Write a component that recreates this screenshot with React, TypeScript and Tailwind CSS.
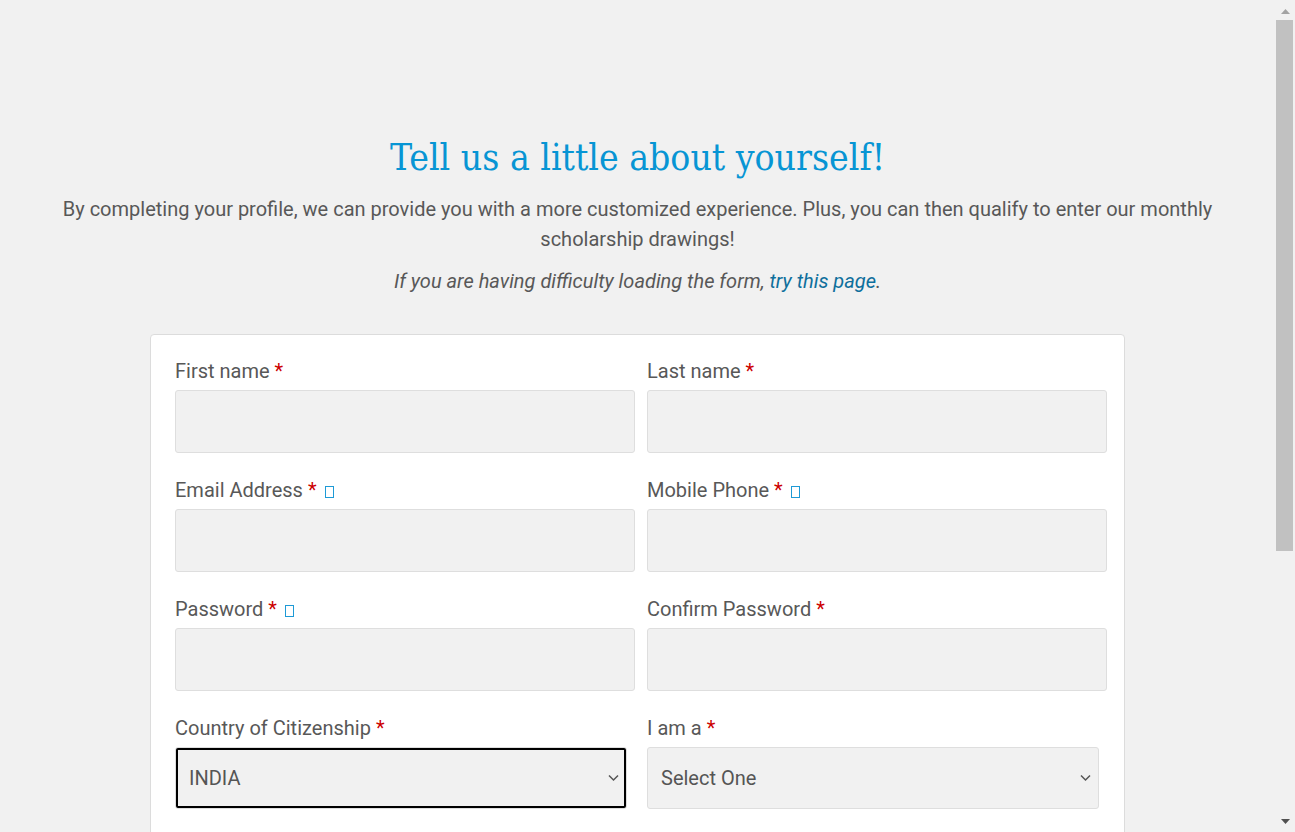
import React from "react";

type Field = {
  label: string;
  info?: boolean;
  kind?: "text" | "select";
  value?: string;
  focused?: boolean;
};

const rows: Field[][] = [
  [{ label: "First name" }, { label: "Last name" }],
  [
    { label: "Email Address", info: true },
    { label: "Mobile Phone", info: true },
  ],
  [{ label: "Password", info: true }, { label: "Confirm Password" }],
  [
    { label: "Country of Citizenship", kind: "select", value: "INDIA", focused: true },
    { label: "I am a", kind: "select", value: "Select One" },
  ],
  [{ label: "Date of Birth" }, { label: "Zip / Postal Code" }],
  [
    { label: "Gender", kind: "select", value: "Select One" },
    { label: "Graduation Year", kind: "select", value: "Select One" },
  ],
];

function Chevron() {
  return (
    <svg width="11" height="7" viewBox="0 0 11 7" className="pointer-events-none absolute right-[8px] top-1/2 -translate-y-1/2">
      <path d="M1 1 L5.5 5.5 L10 1" fill="none" stroke="#555" strokeWidth="1.5" />
    </svg>
  );
}

function FormField({ field }: { field: Field }) {
  return (
    <div className="flex flex-col">
      <label className="flex h-[27px] items-center text-[20px] leading-[27px] text-[#585858]">
        {field.label}
        <span className="ml-[5px] text-[#cc0000]">*</span>
        {field.info && (
          <span className="ml-[8px] mt-[2px] inline-block h-[12px] w-[9px] border border-[#1e9ad6]" />
        )}
      </label>
      <div className="mt-[5px]">
        {field.kind === "select" ? (
          <div className="relative w-[452px]">
            <div
              className={
                "flex h-[62px] w-full items-center rounded-[3px] border border-[#dedede] bg-[#f1f1f1] pl-[13px] text-[20px] text-[#555] " +
                (field.focused ? "outline-2 outline-offset-[-3px] outline-black" : "")
              }
            >
              {field.value}
            </div>
            <Chevron />
          </div>
        ) : (
          <input
            type="text"
            className="h-[63px] w-full rounded-[3px] border border-[#dedede] bg-[#f1f1f1] px-3 text-[20px] text-[#555] outline-none"
          />
        )}
      </div>
    </div>
  );
}

// fake classic scrollbar, it sits over the page's right edge
function Scrollbar() {
  return (
    <div className="fixed right-0 top-0 h-screen w-[21px] bg-[#f1f1f1]">
      <svg width="9" height="5" viewBox="0 0 9 5" className="absolute left-[7px] top-[9px]">
        <path d="M0 5 L4.5 0 L9 5 Z" fill="#a3a3a3" />
      </svg>
      <div className="absolute left-[2px] right-[2px] top-[20px] h-[531px] bg-[#c1c1c1]" />
      <svg width="9" height="5" viewBox="0 0 9 5" className="absolute bottom-[8px] left-[7px]">
        <path d="M0 0 L9 0 L4.5 5 Z" fill="#505050" />
      </svg>
    </div>
  );
}

export default function App() {
  return (
    <div className="min-h-screen bg-[#f1f1f1] pr-[20px] pt-[136px] pb-[62px] font-['Roboto',sans-serif]">
      <h1 className="text-center font-['DejaVu_Serif_Condensed','DejaVu_Serif',serif] text-[37px] leading-[43px] text-[#0795d4]">
        Tell us a little about yourself!
      </h1>
      <p className="mx-auto mt-[15px] max-w-[1160px] text-center text-[20px] leading-[30px] text-[#585858]">
        By completing your profile, we can provide you with a more customized experience. Plus, you can then qualify to enter our monthly scholarship drawings!
      </p>
      <p className="mt-[12px] text-center text-[20px] italic leading-[30px] text-[#585858]">
        If you are having difficulty loading the form,{" "}
        <a href="#" className="text-[#0e6f9c]">
          try this page
        </a>
        .
      </p>

      <div className="mx-auto mt-[38px] w-[975px] rounded-[4px] border border-[#dcdcdc] bg-white pb-[24px] pl-[24px] pr-[17px] pt-[23px]">
        <div className="flex flex-col gap-[24px]">
          {rows.map((row, i) => (
            <div key={i} className="grid grid-cols-2 gap-x-[12px]">
              {row.map((f) => (
                <FormField key={f.label} field={f} />
              ))}
            </div>
          ))}
        </div>
      </div>
      <Scrollbar />
    </div>
  );
}
